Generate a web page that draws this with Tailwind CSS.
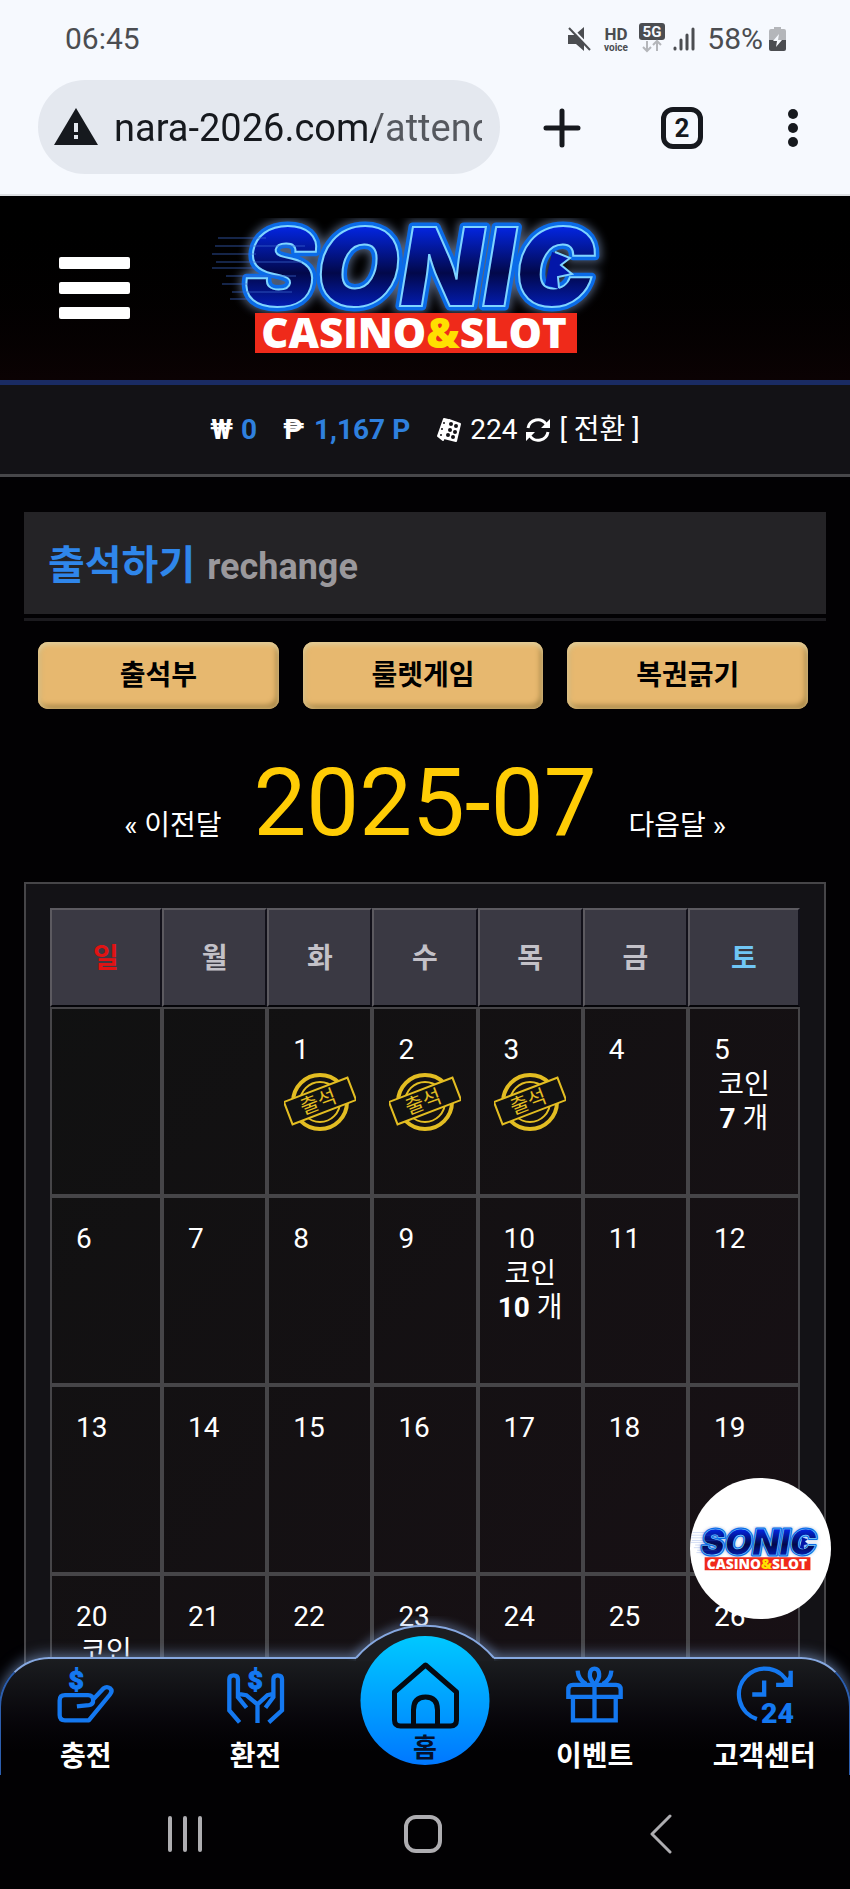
<!DOCTYPE html>
<html lang="ko">
<head>
    <meta charset="UTF-8">
    <meta name="viewport" content="width=device-width, initial-scale=1.0">
    <title>출석하기</title>
    <script src="https://cdn.jsdelivr.net/npm/@tailwindcss/browser@4"></script>
</head>

<body class="flex h-screen flex-col overflow-hidden bg-[#020103] font-[Roboto,'Noto_Sans_CJK_KR',sans-serif] text-[28px] leading-[34px] text-white">

    <!-- shared drawings -->
    <svg class="absolute size-0" aria-hidden="true">
        <defs>
            <linearGradient id="sonicFill" x1="0" y1="0" x2="0" y2="1">
                <stop offset="0.2" stop-color="#0325e0" />
                <stop offset="0.55" stop-color="#02084a" />
                <stop offset="0.95" stop-color="#0328ea" />
            </linearGradient>
            <filter id="soft" x="-10%" y="-30%" width="120%" height="160%">
                <feGaussianBlur stdDeviation="5" />
            </filter>
            <symbol id="logo" viewBox="0 0 426 137">
                <g font-family="Inter" font-weight="900" font-style="italic" font-size="108">
                    <text x="32" y="88" fill="#8fa9d8" stroke="#8fa9d8" stroke-width="12" opacity="0.6" filter="url(#soft)">SONIC</text>
                    <text x="32" y="88" fill="#0a6be8" stroke="#0a6be8" stroke-width="9" stroke-linejoin="round">SONIC</text>
                    <text x="32" y="88" fill="url(#sonicFill)" stroke="#7fd4ff" stroke-width="2">SONIC</text>
                </g>
                <path d="M340 34l18 6-9 7 11 9-14 3 1 12-14-4z" fill="#0316a8" />
                <path d="M343 34l15 6-9 7 11 9-14 3 1 11" fill="none" stroke="#7fd4ff" stroke-width="2" />
                <g stroke="#3d6ad0" stroke-width="1" opacity="0.7">
                    <path d="M6 20h48M3 28h90M0 36h44M4 44h86M0 50h44M14 58h70M10 66h26M20 74h60M18 81h20" />
                </g>
                <path fill="#ef2a1a" d="M43 95h322v40H43z" />
                <text x="202" y="130" text-anchor="middle" fill="#fff" font-family="Open Sans" font-weight="800" font-size="42">CASINO<tspan fill="#ffe000">&amp;</tspan>SLOT</text>
            </symbol>
            <symbol id="stamp" viewBox="0 0 72 60">
                <g fill="none" stroke="#e3bd22">
                    <circle cx="36" cy="31" r="27" stroke-width="4" />
                    <circle cx="36" cy="31" r="20" stroke-width="2" />
                    <g transform="rotate(-21 36 30)">
                        <rect x="2" y="18" width="68" height="24" fill="#111112" stroke-width="2" />
                        <text x="34" y="37" text-anchor="middle" fill="#e3bd22" stroke="none" font-family="Noto Sans CJK KR" font-size="20">출석</text>
                    </g>
                </g>
            </symbol>
        </defs>
    </svg>

    <!-- status bar + browser toolbar -->
    <header class="shrink-0 border-b-2 border-[#dcdfe3] bg-[#f6f9fe] pb-5 text-[#16191e]">
        <div class="flex h-20 items-center justify-between pr-16 pb-0.5 pl-[65px] text-[30px] text-[#4b4d51]">
            <span>06:45</span>
            <div class="flex items-center">
                <svg class="mr-3 h-6 w-6" viewBox="0 0 24 24" fill="#4b4d51">
                    <path d="M1 8h7l9 9v7l-8-7H1zM10 6l7-6v13z" />
                    <path d="M3 0l21 22" stroke="#f6f9fe" stroke-width="3" />
                    <path d="M2 1l21 22" stroke="#4b4d51" stroke-width="2" />
                </svg>
                <svg class="mr-2 h-[30px] w-7 overflow-visible" viewBox="0 -3 28 30" fill="#4b4d51" font-family="Roboto" font-weight="700" text-anchor="middle">
                    <text x="13" y="13" font-size="17">HD</text>
                    <text x="13" y="24" font-size="10">voice</text>
                </svg>
                <svg class="mr-2 h-8 w-[26px]" viewBox="0 0 26 32" fill="none">
                    <rect x="0" y="0" width="26" height="17" rx="3" fill="#4b4d51" />
                    <text x="13" y="14" font-family="Roboto" font-weight="700" font-size="15" text-anchor="middle" fill="#f6f9fe">5G</text>
                    <path d="M8 18v10M4 24l4 4 4-4M18 28V18M14 22l4-4 4 4" stroke="#b4b6ba" stroke-width="2" />
                </svg>
                <svg class="mr-3 h-6 w-[22px]" viewBox="0 0 22 24" stroke="#4b4d51" stroke-width="3" stroke-linecap="round">
                    <path d="M2 21v1M8 13v9M14 8v14M20 2v20" />
                </svg>
                <span>58%</span>
                <svg class="ml-1.5 h-6 w-[17px]" viewBox="0 0 17 24">
                    <path d="M5 0h7v2h3q2 0 2 2v9H0V4q0-2 2-2h3z" fill="#b4b6ba" />
                    <path d="M0 13h17v9q0 2-2 2H2q-2 0-2-2z" fill="#4b4d51" />
                    <path d="M10 7l-6 7h4l-1 6 6-7H9z" fill="#f6f9fe" />
                </svg>
            </div>
        </div>
        <div class="flex items-center pl-[38px]">
            <div class="flex h-[94px] min-w-0 flex-1 items-center rounded-full bg-[#e4e8ef] pr-[18px] pl-4">
                <svg class="mr-4 h-10 w-11 shrink-0" viewBox="0 0 44 40">
                    <path d="M22 1l22 37H0z" fill="#16191e" />
                    <path d="M22 16v9M22 28v4" stroke="#e4e8ef" stroke-width="4" />
                </svg>
                <input type="text" aria-label="주소" value="nara-2026.com/attendance" class="w-full min-w-0 bg-[linear-gradient(90deg,#16191e_262px,#55585e_262px)] bg-clip-text pt-0.5 text-[38px] leading-[48px] text-transparent outline-none">
            </div>
            <div class="mr-[47px] ml-[43px] flex w-[260px] shrink-0 items-center justify-between pt-0.5">
                <button aria-label="새 탭">
                    <svg class="h-10 w-[38px]" viewBox="0 0 38 40" stroke="#16191e" stroke-width="5" stroke-linecap="round"><path d="M19 3v34M3 20h32" /></svg>
                </button>
                <button class="size-[42px] rounded-xl border-[5px] border-[#16191e] text-[26px] leading-8 font-bold">2</button>
                <button aria-label="메뉴">
                    <svg class="h-10 w-5" viewBox="0 0 20 40" fill="#16191e"><circle cx="10" cy="6" r="5" /><circle cx="10" cy="20" r="5" /><circle cx="10" cy="34" r="5" /></svg>
                </button>
            </div>
        </div>
    </header>

    <div class="relative flex-1 overflow-hidden">

        <div class="grid h-[189px] grid-cols-[1fr_auto_1fr] items-center border-b-5 border-[#1a2b63] bg-linear-to-b from-black to-[#0b0203] px-[59px]">
            <button class="flex w-[71px] flex-col gap-[13px]" aria-label="전체메뉴">
                <span class="h-3 w-full rounded-xs bg-white"></span>
                <span class="h-3 w-full rounded-xs bg-white"></span>
                <span class="h-3 w-full rounded-xs bg-white"></span>
            </button>
            <a href="#" aria-label="SONIC CASINO&amp;SLOT"><svg class="mb-1 h-[137px] w-[426px]"><use href="#logo" /></svg></a>
        </div>

        <div class="flex h-[92px] items-center justify-center gap-[26px] border-b-3 border-[#47474a] bg-[#131216]">
            <span class="flex gap-2 font-bold"><span>₩</span><span class="text-[#2f80de]">0</span></span>
            <span class="flex gap-[10px] font-bold"><span>₱</span><span class="text-[#2f80de]">1,167 P</span></span>
            <span class="flex items-center gap-2">
                <svg class="size-[26px]" viewBox="0 0 26 26">
                    <path d="M8 2l4 1-5 20-5-4zM13 3l11 4-4 17-12-3z" fill="#fff" stroke="#fff" stroke-width="2" stroke-linejoin="round" />
                    <g fill="#131216"><circle cx="15" cy="7" r="2" /><circle cx="20" cy="9" r="2" /><circle cx="14" cy="13" r="2" /><circle cx="19" cy="15" r="2" /><circle cx="12" cy="18" r="2" /><circle cx="17" cy="20" r="2" /><circle cx="8" cy="6" r="1" /><circle cx="6" cy="12" r="1" /><circle cx="5" cy="18" r="1" /></g>
                </svg>
                <span>224</span>
                <svg class="size-[26px]" viewBox="0 0 26 26" fill="none" stroke="#fff" stroke-width="3">
                    <path d="M3 11A10 10 0 0 1 21 7M23 15A10 10 0 0 1 5 19" />
                    <path d="M25 2v9h-9zM1 24v-9h9z" fill="#fff" stroke="none" />
                </svg>
                <button>[ 전환 ]</button>
            </span>
        </div>

        <main class="px-6 pt-[35px]">
            <div class="border-b-3 border-[#1b1a1e] pb-1">
                <h1 class="flex h-[102px] items-center bg-[#242326] px-6 pt-1.5 font-bold text-[#2f86ea]">
                    <span class="flex items-baseline gap-3"><span class="text-[40px] leading-[48px]">출석하기</span><span class="text-[36px] text-[#9a989c]">rechange</span></span>
                </h1>
            </div>

            <div class="mt-[21px] grid grid-cols-3 gap-6 pr-[18px] pl-[14px] font-bold text-black">
                <button class="h-[67px] rounded-[10px] bg-[#e7b86f] shadow-[inset_0_3px_4px_#e3cd98,inset_3px_0_5px_#d5b678,inset_-3px_-4px_5px_#a98748]">출석부</button>
                <button class="h-[67px] rounded-[10px] bg-[#e7b86f] shadow-[inset_0_3px_4px_#e3cd98,inset_3px_0_5px_#d5b678,inset_-3px_-4px_5px_#a98748]">룰렛게임</button>
                <button class="h-[67px] rounded-[10px] bg-[#e7b86f] shadow-[inset_0_3px_4px_#e3cd98,inset_3px_0_5px_#d5b678,inset_-3px_-4px_5px_#a98748]">복권긁기</button>
            </div>

            <div class="mt-[38px] mb-[23px] flex items-baseline justify-center gap-8">
                <a href="#">« 이전달</a>
                <h2 class="text-[94px] leading-[112px] text-[#ffcc05]">2025-07</h2>
                <a href="#">다음달 »</a>
            </div>

            <div class="border-2 border-[#464548] bg-[#131216] p-6">
                <table class="w-full table-fixed border-separate border-spacing-0 bg-linear-to-br from-[#101111] to-[#181015] text-left">
                    <thead>
                        <tr class="h-[99px] text-center text-[#c3c1c8] [&>th]:border-2 [&>th]:border-t-[#5c5a60] [&>th]:border-l-[#5c5a60] [&>th]:border-r-[#12111a] [&>th]:border-b-[#050509] [&>th]:bg-[#3a3943] [&>th]:pt-0.5">
                            <th class="w-28 text-[#e01313]">일</th>
                            <th>월</th>
                            <th>화</th>
                            <th>수</th>
                            <th>목</th>
                            <th>금</th>
                            <th class="w-28 text-[#70c6f5]">토</th>
                        </tr>
                    </thead>
                    <tbody class="[&_td]:h-[189px] [&_td]:border-2 [&_td]:border-[#464548] [&_td]:pt-6 [&_td]:align-top">
                        <tr>
                            <td></td>
                            <td></td>
                            <td><div class="pl-6">1</div><svg class="mx-auto mt-1 h-[60px] w-[72px]" aria-label="출석"><use href="#stamp" /></svg></td>
                            <td><div class="pl-6">2</div><svg class="mx-auto mt-1 h-[60px] w-[72px]" aria-label="출석"><use href="#stamp" /></svg></td>
                            <td><div class="pl-6">3</div><svg class="mx-auto mt-1 h-[60px] w-[72px]" aria-label="출석"><use href="#stamp" /></svg></td>
                            <td><div class="pl-6">4</div></td>
                            <td><div class="pl-6">5</div><div class="pt-px text-center">코인<br><b>7</b> 개</div></td>
                        </tr>
                        <tr>
                            <td><div class="pl-6">6</div></td>
                            <td><div class="pl-6">7</div></td>
                            <td><div class="pl-6">8</div></td>
                            <td><div class="pl-6">9</div></td>
                            <td><div class="pl-6">10</div><div class="pt-px text-center">코인<br><b>10</b> 개</div></td>
                            <td><div class="pl-6">11</div></td>
                            <td><div class="pl-6">12</div></td>
                        </tr>
                        <tr>
                            <td><div class="pl-6">13</div></td>
                            <td><div class="pl-6">14</div></td>
                            <td><div class="pl-6">15</div></td>
                            <td><div class="pl-6">16</div></td>
                            <td><div class="pl-6">17</div></td>
                            <td><div class="pl-6">18</div></td>
                            <td><div class="pl-6">19</div></td>
                        </tr>
                        <tr>
                            <td><div class="pl-6">20</div><div class="pt-px text-center">코인</div></td>
                            <td><div class="pl-6">21</div></td>
                            <td><div class="pl-6">22</div></td>
                            <td><div class="pl-6">23</div></td>
                            <td><div class="pl-6">24</div></td>
                            <td><div class="pl-6">25</div></td>
                            <td><div class="pl-6">26</div></td>
                        </tr>
                    </tbody>
                </table>
            </div>
        </main>

        <!-- floating logo -->
        <a href="#" class="absolute right-[19px] bottom-[156px] flex size-[141px] items-center justify-center rounded-full bg-white" aria-label="SONIC CASINO&amp;SLOT">
            <svg class="h-[45px] w-[141px]"><use href="#logo" /></svg>
        </a>

        <!-- bottom menu -->
        <nav class="absolute -inset-x-px bottom-0">
            <div class="grid h-[118px] grid-cols-5 rounded-t-[50px] border-2 border-b-0 border-[#2c5eae] border-t-[#86a8e0] bg-linear-to-b from-[#1b1d20] to-[#020103] to-80% text-center font-bold shadow-[0_-2px_14px_#7f9fd0aa]">
                <a href="#" class="flex flex-col items-center pt-[7px]">
                    <svg class="mb-[17px] h-[57px] w-[57px] shrink-0 overflow-visible" viewBox="168 256 172 172" fill="none" stroke="#1478f0" stroke-width="13">
                        <path d="M228 378l36-4q14-2 13-16-1-14-15-14h-70q-16 0-16 16v44q0 16 16 16h72l64-78q9-11 0-19-10-7-20 1l-34 36" stroke-linejoin="round" />
                        <text x="226" y="325" text-anchor="middle" font-family="Roboto" font-weight="900" font-size="80" fill="#1478f0" stroke="#1478f0" stroke-width="3">$</text>
                    </svg>
                    충전
                </a>
                <a href="#" class="flex flex-col items-center pt-[7px]">
                    <svg class="mb-[17px] h-[57px] w-[57px] shrink-0 overflow-visible" viewBox="680 256 172 172" fill="none" stroke="#1478f0" stroke-width="13">
                        <path d="M718 426l-31-36v-94q0-12 13-12t13 12v54l26 32M714 340l24 4 34 28v56M738 344l34 28 30-28 18-4M806 426l40-36v-94q0-12-13-12t-13 12v54l-24 32" />
                        <text x="765" y="325" text-anchor="middle" font-family="Roboto" font-weight="900" font-size="80" fill="#1478f0" stroke="#1478f0" stroke-width="3">$</text>
                    </svg>
                    환전
                </a>
                <span></span>
                <a href="#" class="flex flex-col items-center pt-[7px]">
                    <svg class="mb-[17px] h-[57px] w-[57px] shrink-0" viewBox="425 256 172 172" fill="none" stroke="#1478f0" stroke-width="13">
                        <path d="M432 349v-22q0-14 14-14h130q14 0 14 14v22zM446 349v71h129v-71M511 312v108M460 270q2 28 26 40M562 270q-2 28-26 40" />
                        <path d="M511 312q-16-18-14-32 2-16 14-16t14 16q2 14-14 32z" />
                    </svg>
                    이벤트
                </a>
                <a href="#" class="flex flex-col items-center pt-[7px]">
                    <svg class="mb-[17px] h-[57px] w-[57px] shrink-0 overflow-visible" viewBox="935 256 172 172" fill="none" stroke="#1478f0" stroke-width="13">
                        <path d="M998 416A78 78 0 1 1 1094 312M1100 270v43h-44M1020 300v42h-36" />
                        <path d="M1100 280v33h-28z" fill="#1478f0" stroke="none" />
                        <text x="1060" y="427" text-anchor="middle" font-family="Roboto" font-weight="900" font-size="86" fill="#1478f0" stroke="none">24</text>
                    </svg>
                    고객센터
                </a>
            </div>
            <!-- bump above the home button -->
            <svg class="absolute bottom-[114px] left-1/2 h-[50px] w-[160px] -translate-x-1/2" viewBox="0 0 160 50">
                <path d="M11 47A90 90 0 0 1 149 47" fill="none" stroke="#7f9fd0" stroke-width="8" opacity="0.5" filter="url(#soft)" />
                <path d="M11 47A90 90 0 0 1 149 47V50H11z" fill="#1c1d21" />
                <path d="M11 47A90 90 0 0 1 149 47" fill="none" stroke="#86a8e0" stroke-width="2" />
            </svg>
            <a href="#" class="absolute bottom-[10px] left-1/2 flex size-[129px] -translate-x-1/2 flex-col items-center rounded-full bg-linear-to-b from-[#00c8ff] to-[#0077ff] pt-[25px] text-[26px] leading-[38px] font-bold text-[#04102a]">
                <svg class="h-[68px] w-[68px] shrink-0" viewBox="0 0 68 68" fill="none" stroke="#050a12" stroke-width="5" stroke-linejoin="round">
                    <path d="M34 4L3 31v28q0 6 6 6h50q6 0 6-6V31zM22 65V49q0-13 12-13t12 13v16" />
                </svg>
                홈
            </a>
        </nav>
    </div>

    <!-- system navigation -->
    <footer class="grid h-[114px] shrink-0 grid-cols-3 items-center justify-items-center bg-[#020103] pt-1 pr-[70px] pl-[66px]">
        <button aria-label="최근 앱"><svg class="size-10" viewBox="0 0 40 40" stroke="#aeadb1" stroke-width="4" stroke-linecap="round"><path d="M5 4v32M20 4v32M35 4v32" /></svg></button>
        <button aria-label="홈"><svg class="size-10" viewBox="0 0 40 40" fill="none" stroke="#aeadb1" stroke-width="4"><rect x="3" y="3" width="34" height="34" rx="10" /></svg></button>
        <button aria-label="뒤로"><svg class="size-10" viewBox="0 0 40 40" fill="none" stroke="#aeadb1" stroke-width="3" stroke-linecap="round" stroke-linejoin="round"><path d="M29 2L11 20l18 18" /></svg></button>
    </footer>

</body>
</html>
